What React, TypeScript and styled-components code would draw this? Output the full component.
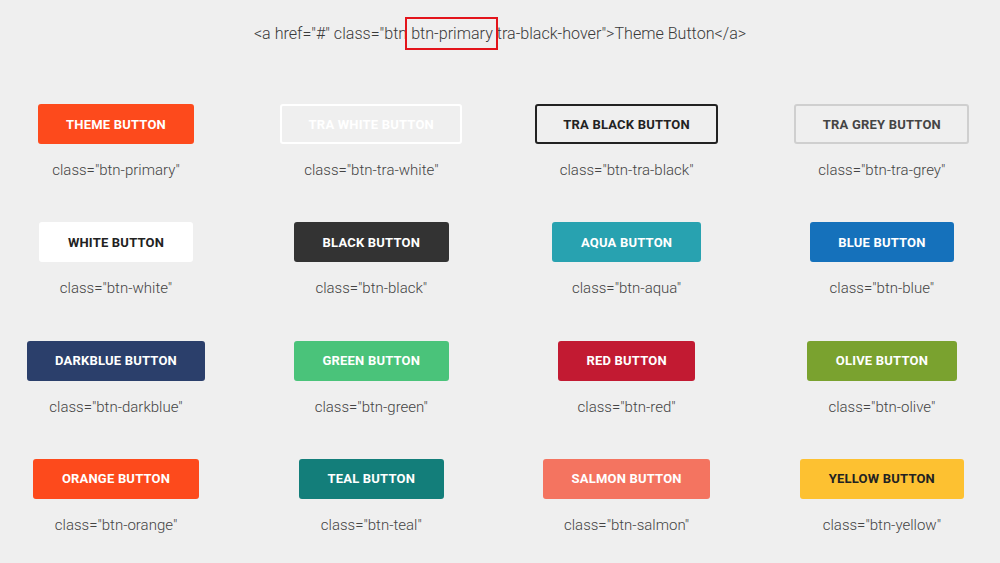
import React from "react";
import styled, { createGlobalStyle } from "styled-components";

const Global = createGlobalStyle`
  html, body { margin: 0; padding: 0; background: #efefef; }
  body { font-family: Roboto, "Liberation Sans", sans-serif; }
`;

const Page = styled.div`
  width: 1000px;
  height: 563px;
  background: #efefef;
  overflow: hidden;
`;

const CodeLine = styled.div`
  padding-top: 24px;
  height: 20px;
  line-height: 20px;
  text-align: center;
  font-size: 16.1px;
  font-weight: 300;
  color: #3a3a3a;
  white-space: pre;
`;

const Mark = styled.span`
  position: relative;
  &::before {
    content: "";
    position: absolute;
    left: -6px;
    right: -5px;
    top: -7px;
    bottom: -7px;
    border: 2px solid #e3141b;
  }
`;

const Grid = styled.div`
  margin-top: 60px;
  display: grid;
  grid-template-columns: repeat(4, 232px);
  column-gap: 23.3px;
  row-gap: 43.3px;
`;

const Cell = styled.div`
  display: flex;
  flex-direction: column;
  align-items: center;
  gap: 17px;
`;

type Variant = { bg: string; border: string; fg: string };

const Btn = styled.a<{ $v: Variant }>`
  display: inline-flex;
  align-items: center;
  justify-content: center;
  box-sizing: border-box;
  height: 40px;
  padding: 0 26.5px;
  border: 2px solid ${(p) => p.$v.border};
  border-radius: 3px;
  background: ${(p) => p.$v.bg};
  color: ${(p) => p.$v.fg};
  font-family: Roboto, "Liberation Sans", sans-serif;
  font-size: 13px;
  font-weight: 700;
  letter-spacing: 0.2px;
  text-transform: uppercase;
  text-decoration: none;
  white-space: nowrap;
`;

const Label = styled.div`
  font-size: 15px;
  line-height: 18px;
  font-weight: 300;
  color: #444;
  white-space: nowrap;
`;

const items: { name: string; cls: string; v: Variant }[] = [
  { name: "Theme Button", cls: "btn-primary", v: { bg: "#fd4a1c", border: "#fd4a1c", fg: "#fff" } },
  { name: "Tra White Button", cls: "btn-tra-white", v: { bg: "transparent", border: "#ffffff", fg: "#ffffff" } },
  { name: "Tra Black Button", cls: "btn-tra-black", v: { bg: "transparent", border: "#222", fg: "#222" } },
  { name: "Tra Grey Button", cls: "btn-tra-grey", v: { bg: "transparent", border: "#cfcfcf", fg: "#444" } },
  { name: "White Button", cls: "btn-white", v: { bg: "#fff", border: "#fff", fg: "#222" } },
  { name: "Black Button", cls: "btn-black", v: { bg: "#333", border: "#333", fg: "#fff" } },
  { name: "Aqua Button", cls: "btn-aqua", v: { bg: "#28a2b0", border: "#28a2b0", fg: "#fff" } },
  { name: "Blue Button", cls: "btn-blue", v: { bg: "#1571bb", border: "#1571bb", fg: "#fff" } },
  { name: "Darkblue Button", cls: "btn-darkblue", v: { bg: "#2b3f6b", border: "#2b3f6b", fg: "#fff" } },
  { name: "Green Button", cls: "btn-green", v: { bg: "#4ac37a", border: "#4ac37a", fg: "#fff" } },
  { name: "Red Button", cls: "btn-red", v: { bg: "#c21a32", border: "#c21a32", fg: "#fff" } },
  { name: "Olive Button", cls: "btn-olive", v: { bg: "#7aa22f", border: "#7aa22f", fg: "#fff" } },
  { name: "Orange Button", cls: "btn-orange", v: { bg: "#fd4a1c", border: "#fd4a1c", fg: "#fff" } },
  { name: "Teal Button", cls: "btn-teal", v: { bg: "#137e7a", border: "#137e7a", fg: "#fff" } },
  { name: "Salmon Button", cls: "btn-salmon", v: { bg: "#f47460", border: "#f47460", fg: "#fff" } },
  { name: "Yellow Button", cls: "btn-yellow", v: { bg: "#fdc131", border: "#fdc131", fg: "#222" } },
];

export default function App() {
  return (
    <Page>
      <Global />
      <CodeLine>
        {'<a href="#" class="btn '}
        <Mark>btn-primary</Mark>
        {' tra-black-hover">Theme Button</a>'}
      </CodeLine>
      <Grid>
        {items.map((it) => (
          <Cell key={it.cls}>
            <Btn href="#" $v={it.v}>
              {it.name}
            </Btn>
            <Label>{`class="${it.cls}"`}</Label>
          </Cell>
        ))}
      </Grid>
    </Page>
  );
}
